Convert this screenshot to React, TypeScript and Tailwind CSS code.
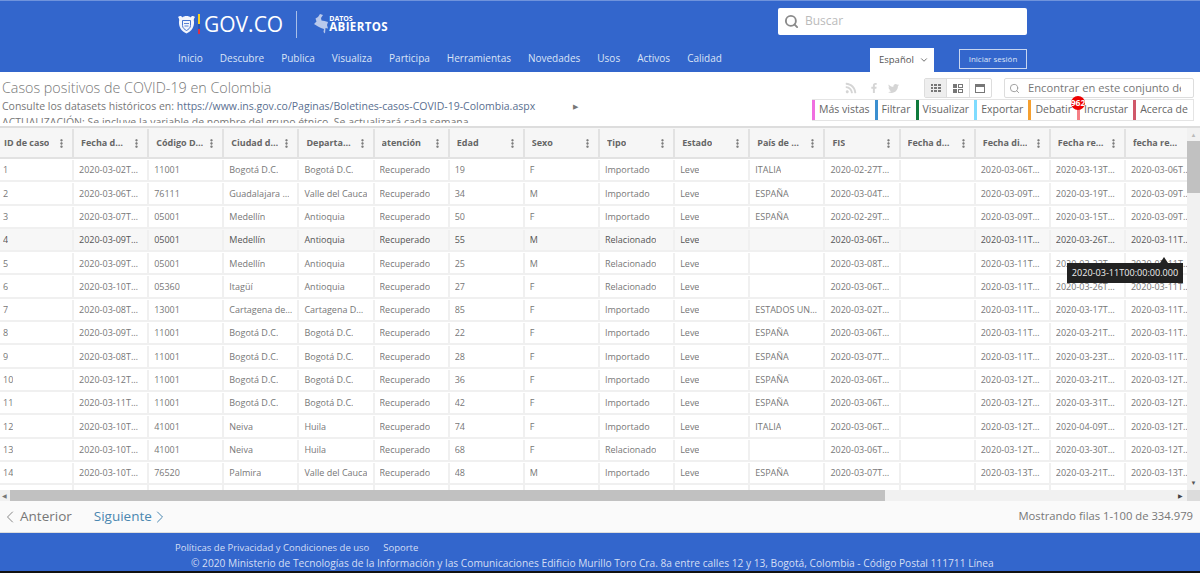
import React from 'react';
import { ChevronDown, ChevronLeft, ChevronRight, EllipsisVertical, Search } from 'lucide-react';
import { FaFacebookF, FaRss, FaTwitter } from 'react-icons/fa';

const navItems = ['Inicio', 'Descubre', 'Publica', 'Visualiza', 'Participa', 'Herramientas', 'Novedades', 'Usos', 'Activos', 'Calidad'];

const tabs = [
  { label: 'Más vistas', border: 'border-l-[#f06ee0]' },
  { label: 'Filtrar', border: 'border-l-[#3b8fd0]' },
  { label: 'Visualizar', border: 'border-l-[#0f7a3c]' },
  { label: 'Exportar', border: 'border-l-[#7fdcff]' },
  { label: 'Debatir', border: 'border-l-[#f5a030]' },
  { label: 'Incrustar', border: 'border-l-[#f57f85]' },
  { label: 'Acerca de', border: 'border-l-[#d0586a]' },
];

const headers = ['ID de caso', 'Fecha d…', 'Código D…', 'Ciudad d…', 'Departa…', 'atención', 'Edad', 'Sexo', 'Tipo', 'Estado', 'País de …', 'FIS', 'Fecha d…', 'Fecha di…', 'Fecha re…', 'fecha re…'];

const rows = [
  ['1', '2020-03-02T…', '11001', 'Bogotá D.C.', 'Bogotá D.C.', 'Recuperado', '19', 'F', 'Importado', 'Leve', 'ITALIA', '2020-02-27T…', '', '2020-03-06T…', '2020-03-13T…', '2020-03-06T…'],
  ['2', '2020-03-06T…', '76111', 'Guadalajara …', 'Valle del Cauca', 'Recuperado', '34', 'M', 'Importado', 'Leve', 'ESPAÑA', '2020-03-04T…', '', '2020-03-09T…', '2020-03-19T…', '2020-03-09T…'],
  ['3', '2020-03-07T…', '05001', 'Medellín', 'Antioquia', 'Recuperado', '50', 'F', 'Importado', 'Leve', 'ESPAÑA', '2020-02-29T…', '', '2020-03-09T…', '2020-03-15T…', '2020-03-09T…'],
  ['4', '2020-03-09T…', '05001', 'Medellín', 'Antioquia', 'Recuperado', '55', 'M', 'Relacionado', 'Leve', '', '2020-03-06T…', '', '2020-03-11T…', '2020-03-26T…', '2020-03-11T…'],
  ['5', '2020-03-09T…', '05001', 'Medellín', 'Antioquia', 'Recuperado', '25', 'M', 'Relacionado', 'Leve', '', '2020-03-08T…', '', '2020-03-11T…', '2020-03-23T…', '2020-03-11T…'],
  ['6', '2020-03-10T…', '05360', 'Itagüí', 'Antioquia', 'Recuperado', '27', 'F', 'Relacionado', 'Leve', '', '2020-03-06T…', '', '2020-03-11T…', '2020-03-26T…', '2020-03-11T…'],
  ['7', '2020-03-08T…', '13001', 'Cartagena de…', 'Cartagena D…', 'Recuperado', '85', 'F', 'Importado', 'Leve', 'ESTADOS UN…', '2020-03-02T…', '', '2020-03-11T…', '2020-03-17T…', '2020-03-11T…'],
  ['8', '2020-03-09T…', '11001', 'Bogotá D.C.', 'Bogotá D.C.', 'Recuperado', '22', 'F', 'Importado', 'Leve', 'ESPAÑA', '2020-03-06T…', '', '2020-03-11T…', '2020-03-21T…', '2020-03-11T…'],
  ['9', '2020-03-08T…', '11001', 'Bogotá D.C.', 'Bogotá D.C.', 'Recuperado', '28', 'F', 'Importado', 'Leve', 'ESPAÑA', '2020-03-07T…', '', '2020-03-11T…', '2020-03-23T…', '2020-03-11T…'],
  ['10', '2020-03-12T…', '11001', 'Bogotá D.C.', 'Bogotá D.C.', 'Recuperado', '36', 'F', 'Importado', 'Leve', 'ESPAÑA', '2020-03-06T…', '', '2020-03-12T…', '2020-03-21T…', '2020-03-12T…'],
  ['11', '2020-03-11T…', '11001', 'Bogotá D.C.', 'Bogotá D.C.', 'Recuperado', '42', 'F', 'Importado', 'Leve', 'ESPAÑA', '2020-03-06T…', '', '2020-03-12T…', '2020-03-31T…', '2020-03-12T…'],
  ['12', '2020-03-10T…', '41001', 'Neiva', 'Huila', 'Recuperado', '74', 'F', 'Importado', 'Leve', 'ITALIA', '2020-03-06T…', '', '2020-03-12T…', '2020-04-09T…', '2020-03-12T…'],
  ['13', '2020-03-10T…', '41001', 'Neiva', 'Huila', 'Recuperado', '68', 'F', 'Relacionado', 'Leve', '', '2020-03-06T…', '', '2020-03-12T…', '2020-03-30T…', '2020-03-12T…'],
  ['14', '2020-03-10T…', '76520', 'Palmira', 'Valle del Cauca', 'Recuperado', '48', 'M', 'Importado', 'Leve', 'ESPAÑA', '2020-03-07T…', '', '2020-03-13T…', '2020-03-21T…', '2020-03-13T…'],
];

// escudo de Colombia, simplificado
const Shield = () => (
  <svg width="17" height="19" viewBox="0 0 17 19" className="shrink-0">
    <path d="M0 2c2-1.500 3.500-1 4.500 0.500c1-2 7-2 8 0c1-1.500 2.500-2 4.500-0.500c-1 1.500-1.500 2.500-1 4.500c0.500 5-2.500 10-7.500 12c-5-2-8-7-7.500-12c0.500-2 0-3-1-4.500z" fill="#f2f5fc" />
    <path d="M4.500 5.500h8v5c0 2.500-2.200 4-4 5c-1.800-1-4-2.500-4-5z" fill="none" stroke="#3366cc" strokeWidth="0.900" />
    <path d="M6 8.500h5M6.500 11h4" stroke="#3366cc" strokeWidth="0.800" />
  </svg>
);

// silueta del mapa de Colombia
const MapMark = () => (
  <svg width="15" height="20" viewBox="0 0 15 20" className="shrink-0" fill="#b9c9ec">
    <path d="M7 0l3 1l-2 3l0.500 2.500l3 0.500l3.500 1l-1 3l1 3.500l-2.500-0.500l-0.500 5.500l-1.500-1.500l0.500-3l-3-1l-3-1.500l-4-2.500l2.500-2.500l-1-3l2.500-1.500z" />
  </svg>
);

const App = () => {
  return (
    <div className="flex h-[573px] w-[1200px] flex-col overflow-hidden bg-white font-['Open_Sans',sans-serif]">
      {/* encabezado */}
      <header className="relative h-[72px] shrink-0 border-t border-[#6f93dc] bg-[#3366cc] text-[#dbe4f6]">
        <div className="flex h-[41px] items-center justify-between pl-[178px] pr-[173px]">
          <div className="mt-[5px] flex items-center">
            <Shield />
            <div className="ml-[3px] flex h-[20px] w-[2px] flex-col">
              <div className="h-1/2 bg-[#f5d020]" />
              <div className="h-1/4 bg-[#2a56b0]" />
              <div className="h-1/4 bg-[#d8304a]" />
            </div>
            <span className="ml-[4px] text-[21px] leading-none text-white">GOV.CO</span>
            <div className="ml-[13px] mr-[16px] h-[27px] w-px bg-[#a9bfe8]" />
            <MapMark />
            <div className="-mt-[2px] ml-px flex flex-col text-white">
              <span className="text-[7px] font-bold leading-[7px]">DATOS</span>
              <span className="text-[11.500px] font-bold leading-[10px] tracking-[0.4px]">ABIERTOS</span>
            </div>
          </div>
          <div className="flex h-[27px] w-[249px] items-center rounded-[2px] bg-white pl-[6px]">
            <Search className="h-[15px] w-[15px] text-[#8a8a8a]" strokeWidth={3} />
            <span className="ml-[6px] pb-[2px] text-[12px] text-[#bbbbbb]">Buscar</span>
          </div>
        </div>
        <div className="flex items-start pl-[178px] pr-[173px]">
          <nav className="flex gap-[17px] text-[10px] leading-[32px]">
            {navItems.map((item) => (
              <span key={item}>{item}</span>
            ))}
          </nav>
          <div className="ml-auto flex items-start gap-[25px]">
            <div className="mt-[6px] flex h-[24px] w-[64px] items-center gap-[5px] bg-white pl-[9px] text-[9.500px] text-[#555555]">
              Español <ChevronDown className="h-[10px] w-[10px]" />
            </div>
            <div className="mt-[7px] flex h-[20px] w-[68px] items-center justify-center border border-[#c8d6f0] text-[8px] text-[#dbe4f6]">Iniciar sesión</div>
          </div>
        </div>
      </header>

      {/* titulo y acciones */}
      <section className="flex h-[54px] shrink-0 justify-between pl-[2px]">
        <div className="h-[51px] w-[790px] min-w-0 overflow-hidden">
          <h1 className="mt-[7px] text-[14.300px] font-light leading-[18px] text-[#777777]">Casos positivos de COVID-19 en Colombia</h1>
          <p className="mt-[2px] flex whitespace-nowrap text-[10.500px] leading-[15px] text-[#777777]">
            Consulte los datasets históricos en:&nbsp;<span className="text-[#5a6f90]">https://www.ins.gov.co/Paginas/Boletines-casos-COVID-19-Colombia.aspx</span>
            <span className="ml-[38px] text-[7px] text-[#777777]">▶</span>
          </p>
          <p className="mt-px whitespace-nowrap text-[10.500px] leading-[14px] text-[#777777]">ACTUALIZACIÓN: Se incluye la variable de nombre del grupo étnico. Se actualizará cada semana</p>
        </div>
        <div className="flex w-[390px] shrink-0 flex-col items-end pr-[6px]">
          <div className="mt-[6px] flex h-[20px] items-center">
            <div className="mr-[25px] flex items-center text-[#d5d5d5]">
              <FaRss className="h-[12px] w-[12px]" />
              <FaFacebookF className="ml-[12px] h-[10px] w-[10px]" />
              <FaTwitter className="ml-[9px] h-[11px] w-[11px]" />
            </div>
            <div className="flex h-[20px] w-[68px] rounded-[2px] border border-[#dddddd]">
              <div className="flex flex-1 items-center justify-center border-r border-[#dddddd] bg-[#eeeeee]">
                <div className="grid h-[8px] w-[10px] grid-cols-3 gap-px">
                  {Array.from({ length: 9 }).map((_, i) => <span key={i} className="bg-[#777777]" />)}
                </div>
              </div>
              <div className="flex flex-1 items-center justify-center border-r border-[#dddddd]">
                <div className="grid h-[9px] w-[10px] grid-cols-[4px_5px] grid-rows-2 gap-px">
                  <span className="bg-[#777777]" /><span className="border border-[#777777]" /><span className="bg-[#777777]" /><span className="border border-[#777777]" />
                </div>
              </div>
              <div className="flex flex-1 items-center justify-center">
                <div className="h-[9px] w-[10px] border border-t-[3px] border-[#777777]" />
              </div>
            </div>
            <div className="ml-[12px] flex h-[20px] w-[190px] items-center rounded-[2px] border border-[#dddddd] pl-[4px] pr-[12px]">
              <Search className="h-[11px] w-[11px] shrink-0 text-[#999999]" />
              <div className="ml-[8px] min-w-0 flex-1 overflow-hidden">
                <span className="block whitespace-nowrap text-[11.200px] text-[#777777]">Encontrar en este conjunto de datos</span>
              </div>
            </div>
          </div>
          <div className="relative mt-px flex h-[22px] w-[382px] border-y border-r border-[#e4e4e4] text-[10.500px] text-[#666666]">
            {tabs.map((tab) => (
              <div key={tab.label} className={`flex grow items-center whitespace-nowrap border-l-[3px] pl-[4px] pr-[2px] ${tab.border}`}>
                {tab.label}
              </div>
            ))}
            <span className="absolute left-[259px] top-[-4px] flex h-[14px] w-[14px] items-center justify-center overflow-hidden rounded-full bg-[#ee0000] text-[8.500px] font-bold text-white">962</span>
          </div>
        </div>
      </section>

      {/* tabla */}
      <section className="relative flex min-h-0 flex-1 flex-col border-t-2 border-[#dddddd] text-[9px] text-[#777777]">
        <div className="flex min-h-0 flex-1">
          <div className="min-w-0 flex-1 overflow-hidden">
            <div className="flex h-[31px] border-b-2 border-[#e2e2e2] bg-[#f6f6f6] pt-px font-bold text-[#666666]">
              {headers.map((h, i) => (
                <div key={i} className={`flex shrink-0 items-center justify-between border-r-2 border-[#e2e2e2] pr-[5px] ${i === 0 ? 'w-[74px] pl-[4px]' : 'w-[75.15px] pl-[7px]'}`}>
                  <span className="truncate">{h}</span>
                  {i < 15 && <EllipsisVertical className="h-[11px] w-[11px] shrink-0 text-[#666666]" strokeWidth={3} />}
                </div>
              ))}
            </div>
            {rows.map((row, r) => (
              <div key={r} className={`flex h-[23.300px] border-b-2 border-[#f0f0f0] pt-px ${r === 3 ? 'bg-[#f7f7f7] text-[#555555]' : ''}`}>
                {row.map((value, c) => (
                  <div key={c} className={`flex shrink-0 items-center border-r-2 border-[#f0f0f0] ${c === 0 ? 'w-[74px] pl-[3px]' : 'w-[75.15px] pl-[5px]'}`}>
                    <span className="truncate">{value}</span>
                  </div>
                ))}
              </div>
            ))}
            <div className="flex h-[10px]">
              {headers.map((h, i) => (
                <div key={i} className={`shrink-0 border-r-2 border-[#f0f0f0] ${i === 0 ? 'w-[74px]' : 'w-[75.15px]'}`} />
              ))}
            </div>
          </div>
          <div className="flex w-[13px] shrink-0 flex-col items-center bg-[#f1f1f1]">
            <span className="mt-[3px] text-[6px] leading-[8px] text-[#bbbbbb]">▲</span>
            <div className="mt-[2px] h-[52px] w-full bg-[#c1c1c1]" />
            <span className="mb-[3px] mt-auto text-[6px] leading-[8px] text-[#555555]">▼</span>
          </div>
        </div>
        <div className="flex h-[11px] shrink-0 items-center bg-[#f1f1f1]">
          <span className="w-[10px] pl-[2px] text-[6px] leading-none text-[#777777]">◀</span>
          <div className="h-full w-[875px] bg-[#c1c1c1]" />
          <span className="ml-auto mr-[4px] text-[6px] leading-none text-[#444444]">▶</span>
          <div className="h-full w-[13px] bg-[#dcdcdc]" />
        </div>

        <div className="absolute left-[1067px] top-[135px] flex h-[20px] w-[116px] items-center justify-center whitespace-nowrap bg-[#222222] text-[9.100px] text-[#eeeeee]">
          2020-03-11T00:00:00.000
          <span className="absolute right-[15px] top-[-6px] h-0 w-0 border-x-[4px] border-b-[6px] border-x-transparent border-b-[#222222]" />
        </div>
      </section>

      {/* paginacion */}
      <section className="flex h-[32px] shrink-0 items-center justify-between border-b border-[#dddddd] bg-[#fafafa] pr-[7px] text-[#777777]">
        <div className="flex items-center text-[13.500px]">
          <ChevronLeft className="h-[20px] w-[20px] text-[#888888]" strokeWidth={1.200} />
          <span>Anterior</span>
          <span className="ml-[22px] text-[#4a87b0]">Siguiente</span>
          <ChevronRight className="-ml-[2px] h-[20px] w-[20px] text-[#4a87b0]" strokeWidth={1.200} />
        </div>
        <span className="text-[11.250px]">Mostrando filas 1-100 de 334.979</span>
      </section>

      {/* pie */}
      <footer className="h-[38px] shrink-0 bg-[#3366cc] pt-[7px] leading-[15px] text-[#d3def4]">
        <div className="flex gap-[14px] pl-[175px] text-[9.500px]">
          <span>Políticas de Privacidad y Condiciones de uso</span>
          <span>Soporte</span>
        </div>
        <p className="mt-px whitespace-nowrap pl-[191px] text-[10.200px]">© 2020 Ministerio de Tecnologías de la Información y las Comunicaciones Edificio Murillo Toro Cra. 8a entre calles 12 y 13, Bogotá, Colombia - Código Postal 111711 Línea</p>
      </footer>
      <div className="h-[2px] shrink-0 bg-[#111111]" />
    </div>
  );
};

export default App;
